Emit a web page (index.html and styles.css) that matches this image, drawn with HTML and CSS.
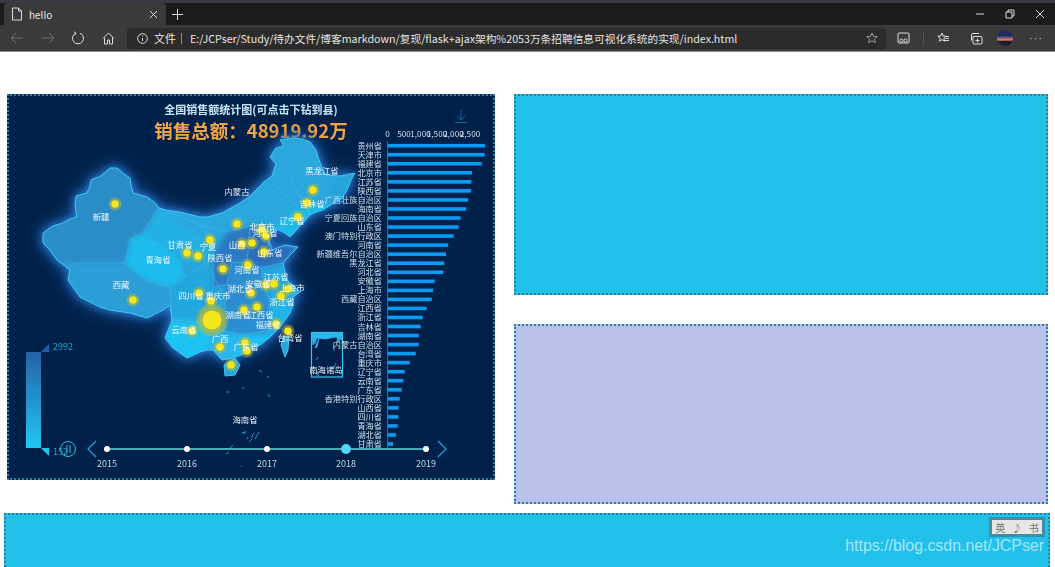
FILE: index.html
```html
<!DOCTYPE html>
<html lang="en">
<head>
    <meta charset="UTF-8">
    <title>hello</title>
    <link rel="stylesheet" href="styles.css">
</head>
<body>
    <div class="browser">
        <div class="tabstrip">
            <div class="tab">
                <svg class="ico" width="12" height="14" viewBox="0 0 12 14"><path d="M1.500 1h6l3 3v9h-9zM7.500 1v3h3"/></svg>
                <span class="tab-title">hello</span>
                <svg class="ico tab-close" width="9" height="9" viewBox="0 0 9 9"><path d="M1 1l7 7M8 1l-7 7"/></svg>
            </div>
            <svg class="ico tab-new" width="11" height="11" viewBox="0 0 11 11"><path d="M5.500 0v11M0 5.500h11"/></svg>
            <div class="win-controls">
                <svg class="ico" width="10" height="10" viewBox="0 0 10 10"><path d="M1 5h8"/></svg>
                <svg class="ico" width="10" height="10" viewBox="0 0 10 10"><path d="M1 3h6v6H1zM3 3V1h6v6H7"/></svg>
                <svg class="ico" width="10" height="10" viewBox="0 0 10 10"><path d="M1 1l8 8M9 1l-8 8"/></svg>
            </div>
        </div>
        <div class="toolbar">
            <div class="nav-buttons">
                <svg class="ico dim" width="14" height="12" viewBox="0 0 14 12"><path d="M13 6H1M6 1L1 6l5 5"/></svg>
                <svg class="ico dim" width="14" height="12" viewBox="0 0 14 12"><path d="M1 6h12M8 1l5 5-5 5"/></svg>
                <svg class="ico" width="14" height="14" viewBox="0 0 14 14"><path d="M9 2.200a5.500 5.500 0 1 1-4 0M5 2.200L3 .8M5 2.200L3.600 4.200"/></svg>
                <svg class="ico" width="13" height="13" viewBox="0 0 13 13"><path d="M1 6.500L6.500 1 12 6.500M2.500 5.500V12h3V8h2v4h3V5.500"/></svg>
            </div>
            <div class="address">
                <svg class="ico" width="11" height="11" viewBox="0 0 11 11"><circle cx="5.500" cy="5.500" r="4.800"/><path d="M5.500 5v3M5.500 2.600v1"/></svg>
                <span class="scheme">文件</span>
                <span class="addr-sep"></span>
                <span class="url">E:/JCPser/Study/待办文件/博客markdown/复现/flask+ajax架构%2053万条招聘信息可视化系统的实现/index.html</span>
                <svg class="ico addr-star" width="12" height="12" viewBox="0 0 12 12"><path d="M6 1l1.500 3.400 3.700.3-2.800 2.400.9 3.600L6 8.800l-3.300 1.900.9-3.600L.8 4.700l3.700-.3z"/></svg>
            </div>
            <div class="tools">
                <svg class="ico" width="13" height="12" viewBox="0 0 13 12"><path d="M2 1h9a1 1 0 0 1 1 1v8a1 1 0 0 1-1 1H2a1 1 0 0 1-1-1V2a1 1 0 0 1 1-1z"/><circle cx="4.500" cy="8.500" r="1.600"/><circle cx="8.500" cy="8.500" r="1.600"/></svg>
                <span class="tool-sep"></span>
                <svg class="ico" width="13" height="12" viewBox="0 0 13 12"><path d="M5 1l1.200 3 3 .2-2.300 2 .7 3L5 7.600 2.400 9.200l.7-3-2.300-2 3-.2zM8.500 4.500H12M8.500 6.500H12M7.500 8.500H12"/></svg>
                <svg class="ico tool-wide" width="13" height="13" viewBox="0 0 13 13"><path d="M3 4.500h8a1 1 0 0 1 1 1V11a1 1 0 0 1-1 1H4a1 1 0 0 1-1-1zM1.500 8.500V3a1.500 1.500 0 0 1 1.500-1.500h6M7.500 6.500v4M5.500 8.500h4"/></svg>
                <span class="avatar"></span>
                <span class="more">···</span>
            </div>
        </div>
    </div>

    <div class="page">
        <div class="panel panel-chart">
            <svg id="chart" class="chart" viewBox="9 96 484 382" width="484" height="382">
                <defs>
                    <clipPath id="chinaClip"><path id="chinaShape" d="M43 233L50 228 53 226 63 223 70 219 77 217 75 205 76 196 87 193 90 186 91 180 101 176 110 168 117 168 124 174 130 178 131 186 133 193 147 197 154 202 159 208 165 210 180 212 200 217 207 217 222 213 233 207 240 203 250 196 256 190 264 182 272 176 276 164 270 157 276 148 284 146 280 140 292 138 302 139 310 142 316 150 318 157 322 168 325 175 340 176 355 173 351 180 350 183 346 192 340 200 332 204 323 210 316 212 310 215 300 226 290 237 285 233 275 228 268 238 272 250 285 245 298 247 290 255 283 263 285 272 287 280 294 286 300 292 293 297 293 306 290 313 285 320 280 327 270 337 260 345 250 350 241 355 233 358 222 360 213 350 207 350 200 352 187 358 173 348 165 338 172 320 170 305 163 310 147 318 130 313 123 312 110 310 100 307 80 297 68 280 70 270 57 260 50 250 43 243Z"/></clipPath>
                    <linearGradient id="legendGrad" x1="0" y1="0" x2="0" y2="1">
                        <stop offset="0" stop-color="#2560a8"/>
                        <stop offset="1" stop-color="#20c8f0"/>
                    </linearGradient>
                </defs>

                <text class="chart-title" x="251" y="114" text-anchor="middle">全国销售额统计图(可点击下钻到县)</text>
                <text class="chart-total" x="251" y="138" text-anchor="middle">销售总额：48919.92万</text>
                <path class="download" d="M461 110v10M457 116l4 4 4-4M455 122.500h12"/>

                <!-- map -->
                <g class="map-glow"><use href="#chinaShape" class="land-base"/></g>
                <g clip-path="url(#chinaClip)">
                    <g class="province-fills">
                        <path fill="#2b8dc8" d="M30 160H165L159 208 143 233 130 240 128 253 125 263 75 263 68 268 30 260Z"/>
                        <path fill="#2a9ed5" d="M30 263H75L125 263 147 280 170 287 172 320 120 330 60 300Z"/>
                        <path fill="#1cbcee" d="M130 240L143 233 160 245 180 263 185 277 170 287 147 280 125 263 128 253Z"/>
                        <path fill="#23b0e4" d="M159 208L200 225 215 240 207 262 190 262 180 263 160 245 143 233Z"/>
                        <path fill="#2aa8de" d="M165 210H240L262 172 275 140H330V210L290 237 255 228 225 232 205 240 185 228Z"/>
                        <path fill="#1dbbec" d="M272 232L295 210 320 205 335 205 290 240Z"/>
                        <path fill="#2c78c2" d="M227 232L250 226 247 262 232 262 227 285 213 287 213 257Z"/>
                        <path fill="#2a6fbd" d="M250 226L272 232 268 245 285 245 298 247 283 263 262 268 247 262Z"/>
                        <path fill="#2f8ed0" d="M232 262L262 268 264 285 240 285 227 285Z"/>
                        <path fill="#21a8e0" d="M262 268L285 265 300 292 293 297 272 300 264 285Z"/>
                        <path fill="#22a6de" d="M170 287L185 277 207 262 213 287 225 300 215 305 206 322 172 320Z"/>
                        <path fill="#2b8ed2" d="M225 285H264L270 300 270 330 245 335 225 332 225 305Z"/>
                        <path fill="#1cc2f2" d="M160 320H206L212 345 207 350 187 365 165 345Z"/>
                        <path fill="#26b8ee" d="M206 322L225 332 240 335 240 345 233 365 205 360 212 345Z"/>
                        <path fill="#1cc0f2" d="M240 335H270L285 330 262 352 233 365Z"/>
                        <path fill="#1fb4ea" d="M270 300L300 292 290 313 270 337Z"/>
                    </g>
                    <path class="borders" d="M159 208L143 233 130 240 128 253 125 263 75 263 68 268M125 263L147 280 170 287 172 320M130 240L160 245 180 263 185 277 170 287M159 208L200 225 215 240 207 262 185 277M200 225L225 232 250 226 290 237M213 257L213 287 227 285 232 262 247 262 250 226M247 262L262 268 283 263M272 232L268 245 285 245M264 285L262 268M227 285H264L270 300 300 292M207 262L225 300 206 322 172 320M225 300V332L206 322M225 332L245 335 270 330 270 300M240 335L233 358M206 322L212 345 207 350M270 330L285 328M262 172L295 205 320 205M290 178L310 215"/>
                </g>
                <use href="#chinaShape" class="land-edge"/>
                <path class="land-small" d="M284 336L289 337 288 350 285 357 281 345ZM224 365L235 358 240 365 235 375 225 376Z"/>

                <g class="islands">
                    <path d="M259 370l3 2M267 376l2 2M268 394l2 3M242 388l2 0M226 392l3 0M242 433l3-1M246 431l-2 3M254 433l-3 5M259 432l-4 7M228 450l5-5M226 454l3-2M248 437l-1 2M241 466l1 0M252 439l-3 3"/>
                </g>

                <!-- nanhai inset -->
                <rect class="nanhai-box" x="311.500" y="332.500" width="31" height="44.500"/>
                <path class="nanhai-fill" d="M312 333H342V340L336 337 325 339 317 338 313 345ZM338 337l2 5-3-1zM316 340l-1 4M319 338l-2 9-2 1z M318 357l-2 3M334 346v5M336 363l-3 6M318 371l-1 5M318 375l1 1"/>

                <g id="dots"></g>
                <g id="mapLabels"></g>

                <!-- bars -->
                <g id="xAxis"></g>
                <line class="axis" x1="387.500" y1="141" x2="387.500" y2="448"/>
                <g id="bars"></g>

                <!-- legend -->
                <rect x="26" y="352" width="15" height="96" fill="url(#legendGrad)"/>
                <path d="M41 352h8v-8z" fill="#1f5fa8"/>
                <path d="M41 448h8v8z" fill="#20c8f0"/>
                <text class="legend-text" x="53" y="350">2992</text>
                <text class="legend-text" x="53" y="455">152</text>

                <!-- timeline -->
                <circle class="tl-ring" cx="68" cy="449" r="7.500"/>
                <path class="tl-ring" d="M67 445v8M70 445v8"/>
                <path class="tl-arrow" d="M96 441l-8 8 8 8M438 441l8 8-8 8"/>
                <line class="tl-line" x1="107" y1="449" x2="426" y2="449"/>
                <g id="timeline"></g>
            </svg>
        </div>
        <div class="side">
            <div class="panel panel-cyan"></div>
            <div class="panel panel-lavender"></div>
        </div>
    </div>

    <div class="panel panel-bottom">
        <div class="ime"><span>英</span><span>♪</span><span>书</span></div>
        <div class="watermark">https://blog.csdn.net/JCPser</div>
    </div>

    <script>
        const NS = 'http://www.w3.org/2000/svg';

        function add(parentId, tag, attrs, text) {
            const el = document.createElementNS(NS, tag);
            for (const k in attrs) el.setAttribute(k, attrs[k]);
            if (text) el.textContent = text;
            document.getElementById(parentId).appendChild(el);
        }

        // name, bar length in px
        const rows = [
            ['贵州省', 97], ['天津市', 96.7], ['福建省', 93.7], ['北京市', 84], ['江苏省', 83.3], ['陕西省', 83],
            ['广西壮族自治区', 80], ['海南省', 78.3], ['宁夏回族自治区', 72.7], ['山东省', 70.7], ['澳门特别行政区', 65.7],
            ['河南省', 60.3], ['新疆维吾尔自治区', 58], ['黑龙江省', 56.3], ['河北省', 55.3], ['安徽省', 46.7], ['上海市', 45],
            ['西藏自治区', 43.7], ['江西省', 38.7], ['浙江省', 34.7], ['吉林省', 32.7], ['湖南省', 30.7], ['内蒙古自治区', 30.7],
            ['台湾省', 27.7], ['重庆市', 21.7], ['辽宁省', 16.7], ['云南省', 15.3], ['广东省', 13.7], ['香港特别行政区', 11.7],
            ['山西省', 10.7], ['四川省', 10.3], ['青海省', 9.7], ['湖北省', 8], ['甘肃省', 5]
        ];
        rows.forEach((r, i) => {
            const y = 145.7 + i * 9.04;
            add('bars', 'text', { class: 'bar-label', x: 382, y: y + 3, 'text-anchor': 'end' }, r[0]);
            add('bars', 'rect', { class: 'bar', x: 388, y: y - 1.8, width: r[1], height: 3.6 });
        });

        [['0', 387.5], ['500', 404], ['1,000', 420.5], ['1,500', 437], ['2,000', 453.5], ['2,500', 470]].forEach(t => {
            add('xAxis', 'text', { class: 'bar-label', x: t[1], y: 137, 'text-anchor': 'middle' }, t[0]);
        });

        const dots = [
            [115, 204], [237, 224], [210, 240], [187, 253], [198, 256], [223, 269], [242, 244], [252, 243], [248, 265],
            [313, 190], [307, 203], [298, 217], [262, 230], [266, 236], [264, 252], [133, 300], [199, 293], [211, 301],
            [192, 331], [220, 347], [231, 365], [245, 343], [247, 351], [244, 310], [251, 293], [257, 307], [266, 285],
            [274, 284], [288, 289], [281, 296], [276, 324], [288, 331]
        ];
        add('dots', 'circle', { class: 'dot-halo', cx: 212, cy: 320, r: 16 });
        add('dots', 'circle', { class: 'dot-halo', cx: 212, cy: 320, r: 13 });
        add('dots', 'circle', { class: 'dot', cx: 212, cy: 320, r: 9.5 });
        dots.forEach(d => {
            add('dots', 'circle', { class: 'dot-halo', cx: d[0], cy: d[1], r: 6.5 });
            add('dots', 'circle', { class: 'dot', cx: d[0], cy: d[1], r: 3.8 });
        });

        const labels = [
            ['新疆', 101, 217], ['内蒙古', 237, 192], ['黑龙江省', 322, 171], ['吉林省', 312, 204], ['辽宁省', 292, 221],
            ['北京市', 262, 227], ['河北省', 265, 233], ['山西', 237, 245], ['山东省', 270, 253], ['甘肃省', 180, 245],
            ['宁夏', 208, 247], ['青海省', 158, 260], ['陕西省', 220, 258], ['河南省', 247, 270], ['江苏省', 276, 277],
            ['安徽省', 258, 284], ['湖北省', 240, 289], ['四川省', 191, 296], ['重庆市', 218, 296], ['上海市', 292, 288],
            ['浙江省', 282, 302], ['湖南省', 238, 315], ['江西省', 261, 315], ['福建省', 268, 325], ['台湾省', 290, 338],
            ['云南省', 184, 330], ['广西', 220, 339], ['广东省', 246, 347], ['西藏', 121, 285], ['海南省', 245, 420],
            ['南海诸岛', 326, 370]
        ];
        labels.forEach(l => {
            add('mapLabels', 'text', { class: 'map-label', x: l[1], y: l[2] + 3, 'text-anchor': 'middle' }, l[0]);
        });

        [[107, '2015'], [187, '2016'], [267, '2017'], [346, '2018'], [426, '2019']].forEach(t => {
            const big = t[1] === '2018';
            add('timeline', 'circle', { class: big ? 'tl-current' : 'tl-dot', cx: t[0], cy: 449, r: big ? 5 : 3 });
            add('timeline', 'text', { class: 'tl-text', x: t[0], y: 467, 'text-anchor': 'middle' }, t[1]);
        });
    </script>
</body>
</html>
```

FILE: styles.css
```css
html, body {
    margin: 0;
    height: 567px;
    overflow: hidden;
    background: #fff;
    font-family: "Noto Sans CJK SC", "Liberation Sans", sans-serif;
}

/* browser frame */
.browser {
    height: 52px;
    background: #3a3a3a;
    border-bottom: 1px solid #8d8d8d;
    box-sizing: border-box;
    color: #e4e4e4;
}
.ico {
    fill: none;
    stroke: #dcdcdc;
    stroke-width: 1;
    flex: none;
}
.ico.dim {
    stroke: #6c6c6c;
}
.tabstrip {
    height: 25px;
    padding-left: 4px;
    box-sizing: border-box;
    border-top: 3px solid #363c42;
    background: #1b1b1b;
    display: flex;
    align-items: stretch;
}
.tab {
    width: 162px;
    padding: 0 7px;
    box-sizing: border-box;
    background: #3a3a3a;
    border-radius: 4px 4px 0 0;
    display: flex;
    align-items: center;
    gap: 6px;
}
.tab-title {
    font-size: 10px;
    flex: 1;
}
.tab-close {
    margin-right: 1px;
}
.tab-new {
    align-self: center;
    margin-left: 6px;
}
.win-controls {
    margin-left: auto;
    padding-right: 10px;
    display: flex;
    align-items: center;
    gap: 20px;
}
.toolbar {
    height: 26px;
    display: flex;
    align-items: center;
}
.nav-buttons {
    width: 127px;
    flex: none;
    padding-left: 10px;
    box-sizing: border-box;
    display: flex;
    align-items: center;
    gap: 16.5px;
}
.address {
    width: 759px;
    height: 21px;
    flex: none;
    padding: 0 8px 0 10px;
    box-sizing: border-box;
    background: #2b2b2b;
    border-radius: 3px;
    display: flex;
    align-items: center;
    font-size: 11px;
    white-space: nowrap;
}
.scheme {
    margin-left: 6px;
}
.addr-sep {
    width: 1px;
    height: 11px;
    background: #8a8a8a;
    margin: 0 8px 0 5px;
}
.url {
    font-size: 10.700px;
}
.addr-star {
    margin-left: auto;
    stroke: #9a9a9a;
}
.tools {
    flex: 1;
    padding-left: 11px;
    display: flex;
    align-items: center;
    gap: 13px;
}
.tool-sep {
    width: 1px;
    height: 12px;
    background: #555;
}
.tool-wide {
    margin-left: 7px;
}
.avatar {
    width: 16px;
    height: 16px;
    border-radius: 50%;
    margin-left: 1px;
    background: linear-gradient(#232a5e 0 35%, #7a5aa0 50%, #ef8a3c 62%, #1d1a33 72%);
}
.more {
    font-family: "Liberation Sans", sans-serif;
    font-size: 11px;
    letter-spacing: 1px;
    color: #d0d0d0;
    margin-left: 3px;
}

/* page */
.page {
    padding: 42px 0 0 7px;
    display: flex;
    gap: 19px;
}
.panel {
    border: 2px dotted #2b7f9c;
    box-sizing: border-box;
}
.panel-chart {
    width: 488px;
    height: 386px;
    background: #00214a;
    flex: none;
}
.chart {
    display: block;
    filter: blur(.3px);
}
.side {
    width: 534px;
    height: 410px;
    display: flex;
    flex-direction: column;
    gap: 29px;
}
.panel-cyan {
    height: 201px;
    background: #21c1ea;
}
.panel-lavender {
    height: 180px;
    background: #b8c2ea;
}
.panel-bottom {
    position: relative;
    width: 1046px;
    height: 70px;
    margin: 9px 0 0 4px;
    background: #21c1ea;
}

/* chart text */
.chart text {
    font-family: "Noto Sans CJK SC", "Liberation Sans", sans-serif;
}
.chart-title {
    font-size: 11px;
    font-weight: 700;
    fill: #c9e6f5;
}
.chart-total {
    font-size: 18.500px;
    font-weight: 700;
    fill: #f5a442;
}
.download {
    fill: none;
    stroke: #0f6aa6;
    stroke-width: 1;
}
.map-glow {
    filter: drop-shadow(0 0 5px #2f86e0) drop-shadow(0 0 8px #1c5fb0);
}
.land-base {
    fill: #27a4d9;
}
.province-fills {
    filter: blur(2px);
}
.land-edge {
    fill: none;
    stroke: #42c6f2;
    stroke-width: 1;
}
.land-small {
    fill: #1fa9df;
    stroke: #42c6f2;
    stroke-width: 1;
}
.borders {
    fill: none;
    stroke: #46b9e8;
    stroke-width: .6;
}
.islands {
    fill: none;
    stroke: #1f9ed2;
    stroke-width: 1;
}
.nanhai-box {
    fill: none;
    stroke: #3cc4f0;
    stroke-width: 1.200;
}
.nanhai-fill {
    fill: #2cb8ea;
    stroke: #2cb8ea;
    stroke-width: .8;
}
.dot {
    fill: #f5e71b;
}
.dot-halo {
    fill: #c8bc2a;
    opacity: .45;
}
.map-label {
    font-size: 8.400px;
    fill: #fff;
    opacity: .92;
}
.bar-label {
    font-size: 8.200px;
    fill: #d3dfe8;
}
.bar {
    fill: #0b9af4;
}
.axis {
    stroke: #41688c;
    stroke-width: 1;
}
.legend-text {
    font-size: 9px;
    fill: #1aa7c9;
}
.tl-ring {
    fill: none;
    stroke: #2ac2df;
    stroke-width: 1;
}
.tl-arrow {
    fill: none;
    stroke: #1fa2da;
    stroke-width: 1.200;
}
.tl-line {
    stroke: #5fd8d8;
    stroke-width: 1.600;
}
.tl-dot {
    fill: #fff;
}
.tl-current {
    fill: #52d8f5;
}
.tl-text {
    font-size: 9px;
    fill: #b8dce8;
}

/* stuck over the screenshot */
.ime {
    position: absolute;
    top: 3px;
    right: 4px;
    width: 54px;
    height: 18px;
    box-sizing: border-box;
    border: 2px solid #4a8a9c;
    outline: 1px solid rgba(40, 110, 130, .5);
    background: #e6e6e6;
    color: #777;
    font-size: 10px;
    display: flex;
    align-items: center;
    justify-content: space-around;
}
.watermark {
    position: absolute;
    top: 22px;
    right: 4px;
    font-family: "Liberation Sans", sans-serif;
    font-size: 15.900px;
    color: rgba(255, 255, 255, .62);
    white-space: nowrap;
}
```
